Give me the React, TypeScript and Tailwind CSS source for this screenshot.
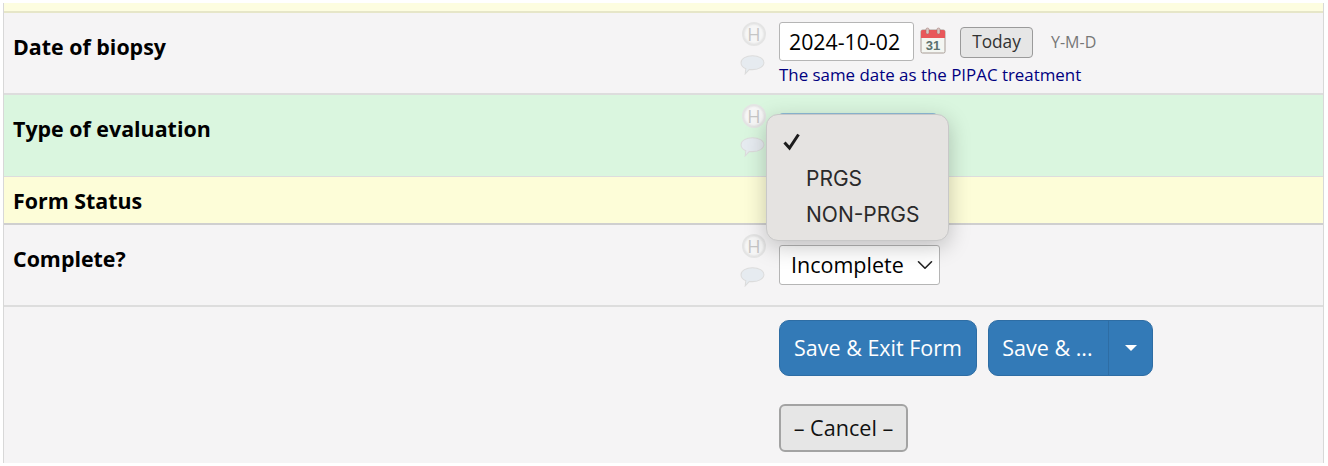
import { ChevronDown } from "lucide-react";

function HelpIcons() {
  return (
    <div className="ml-[1px] mt-[9px] flex w-[26px] shrink-0 flex-col items-center gap-[8px]">
      <span className="flex h-[24px] w-[24px] items-center justify-center rounded-full border-2 border-[#e4e4e4] bg-[#f6f6f6] text-[18px] leading-none text-[#c6c6c6] shadow-[inset_0_0_2px_#d8d8d8]">
        H
      </span>
      <svg width="25" height="21" viewBox="0 0 24 20" className="-ml-[4px]">
        <path
          d="M12 1.500c6 0 11 2.900 11 6.700s-5 6.700-11 6.700c-1 0-2 0-3-.2L5 19l.6-5C3 12.800 1 10.800 1 8.200 1 4.400 6 1.500 12 1.500z"
          fill="#e6ebf0"
          stroke="#dcdcdc"
        />
      </svg>
    </div>
  );
}

function CalendarIcon() {
  return (
    <svg width="26" height="27" viewBox="0 0 26 27" className="shrink-0">
      <rect x="1" y="3" width="24" height="23" rx="1.500" fill="#f4f6f2" stroke="#a89c96" />
      <path d="M1 4.500A1.500 1.500 0 0 1 2.500 3h21A1.500 1.500 0 0 1 25 4.500V11H1z" fill="#e8575a" />
      <rect x="6" y="1" width="3" height="6" rx="1.500" fill="#d8c8c4" stroke="#9a6a66" strokeWidth=".5" />
      <rect x="17" y="1" width="3" height="6" rx="1.500" fill="#d8c8c4" stroke="#9a6a66" strokeWidth=".5" />
      <text x="13" y="23" textAnchor="middle" fontSize="13" fontWeight="700" fill="#5d716e" fontFamily="Liberation Sans, sans-serif">
        31
      </text>
    </svg>
  );
}

export default function App() {
  return (
    <div className="relative h-[466px] w-[1328px] overflow-hidden bg-white px-[3px] pb-[3px] pt-[3px] font-['Open_Sans',sans-serif] text-black">
      <div className="mr-[1px] border-l border-r border-[#d8d8d8]">
        <div className="h-[10px] border-b-2 border-[#e6e6c8] bg-[#fdfde0]" />

        <div className="flex h-[82px] border-b-2 border-[#dddddd] bg-[#f5f4f5]">
          <div className="w-[736px] pl-[9px] pt-[19px] text-[21.400px] font-bold leading-[30px]">Date of biopsy</div>
          <HelpIcons />
          <div className="ml-[12px] pt-[9px]">
            <div className="flex items-center">
              <div className="flex h-[39px] w-[135px] items-center rounded-[3px] border border-[#b5b5b5] bg-white pl-[9px] text-[21.300px]">
                2024-10-02
              </div>
              <span className="ml-[6px] -mt-[2px]"><CalendarIcon /></span>
              <button className="ml-[14px] mt-[1px] h-[31px] w-[73px] rounded-[4px] border border-[#9a9a9a] bg-[#e6e6e6] text-[17.300px] text-[#333333]">
                Today
              </button>
              <span className="ml-[18px] text-[16px] text-[#777777]">Y-M-D</span>
            </div>
            <div className="mt-[4px] text-[16.900px] leading-[20px] text-[#000080]">The same date as the PIPAC treatment</div>
          </div>
        </div>

        <div className="flex h-[82px] border-b border-[#dddddd] bg-[#daf6df]">
          <div className="w-[736px] pl-[9px] pt-[19px] text-[21.400px] font-bold leading-[30px]">Type of evaluation</div>
          <HelpIcons />
          <div className="ml-[12px] mt-[18px] h-[10px] w-[158px] rounded-t-[4px] border-t-2 border-[#8fbcd8]" />
        </div>

        <div className="flex h-[48px] items-center border-b-2 border-[#cfcfcf] bg-[#fdfdd8] pl-[9px] pt-[2px] text-[21.400px] font-bold">
          Form Status
        </div>

        <div className="flex h-[82px] border-b-2 border-[#dddddd] bg-[#f5f4f5]">
          <div className="w-[736px] pl-[9px] pt-[19px] text-[21.400px] font-bold leading-[30px]">Complete?</div>
          <HelpIcons />
          <div className="ml-[12px] mt-[20px] flex h-[40px] w-[161px] items-center justify-between rounded-[3px] border border-[#b5b5b5] bg-white pl-[11px] pr-[1px] text-[21.500px]">
            Incomplete
            <ChevronDown size={26} strokeWidth={1.500} className="text-[#222222]" />
          </div>
        </div>

        <div className="h-[156px] bg-[#f5f4f5] pl-[775px] pt-[13px]">
          <div className="flex gap-[11px]">
            <button className="h-[56px] w-[198px] rounded-[10px] border border-[#2e6da4] bg-[#337ab7] text-[21.500px] text-white">
              Save &amp; Exit Form
            </button>
            <div className="flex h-[56px] w-[165px] rounded-[10px] border border-[#2e6da4] bg-[#337ab7] text-[21.500px] text-white">
              <span className="flex w-[120px] items-center justify-center border-r border-[#2e6da4] pr-[2px]">Save &amp; ...</span>
              <span className="flex flex-1 items-center justify-center">
                <span className="h-0 w-0 border-x-[6px] border-t-[6px] border-x-transparent border-t-white" />
              </span>
            </div>
          </div>
          <button className="mt-[28px] h-[48px] w-[129px] rounded-[6px] border-2 border-[#a3a3a3] bg-[#e6e6e6] text-[21.600px] text-[#111111]">
            – Cancel –
          </button>
        </div>
      </div>

      <div className="absolute left-[766px] top-[114px] h-[127px] w-[183px] rounded-[12px] border border-[#c8c8c8] bg-[#e5e3e1] font-['Inter',sans-serif] text-[21px] text-[#2a2a2a] shadow-[0_6px_22px_rgba(0,0,0,0.22)]">
        <svg width="18" height="18" viewBox="0 0 18 18" className="absolute left-[16px] top-[18px]">
          <path d="M1.500 9.500l5 5.500L15.500 1.500" fill="none" stroke="#1c1c1c" strokeWidth="3" />
        </svg>
        <div className="absolute left-[39px] top-[49px] leading-[30px]">PRGS</div>
        <div className="absolute left-[39px] top-[85px] leading-[30px]">NON-PRGS</div>
      </div>
    </div>
  );
}
